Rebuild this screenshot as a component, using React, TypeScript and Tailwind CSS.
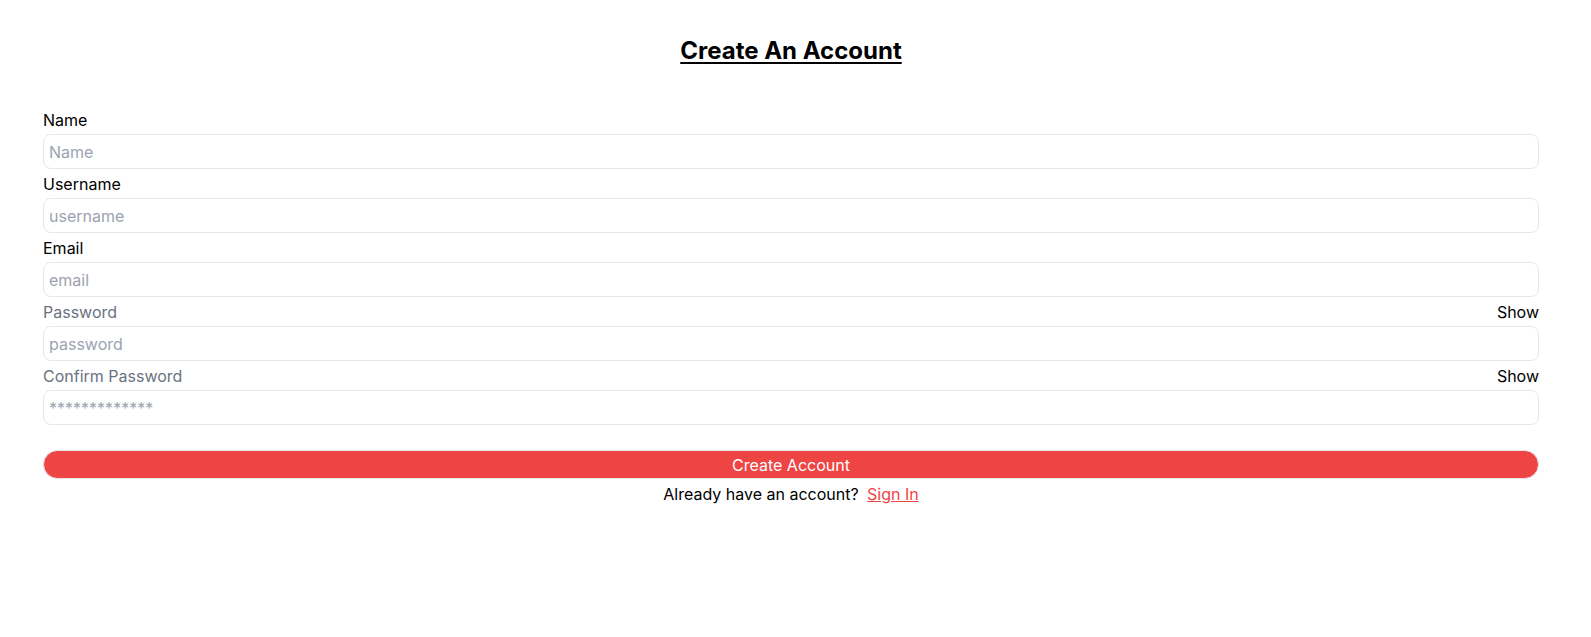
export default function App() {
  const fields = [
    { label: "Name", placeholder: "Name", muted: false, show: false },
    { label: "Username", placeholder: "username", muted: false, show: false },
    { label: "Email", placeholder: "email", muted: false, show: false, focus: true },
    { label: "Password", placeholder: "password", muted: true, show: true },
    { label: "Confirm Password", placeholder: "*************", muted: true, show: true },
  ];

  return (
    <div className="min-h-screen bg-white font-['Inter',sans-serif] text-black">
      <div className="pl-[43px] pr-[52px] pt-[35px]">
        <h1 className="text-center text-2xl leading-8 font-bold underline underline-offset-[3px] decoration-2">
          Create An Account
        </h1>

        <form className="mt-[41px] flex flex-col gap-[3px]">
          {fields.map((f) => (
            <div key={f.label} className="flex flex-col gap-0.5">
              <div className="flex h-6 items-center justify-between text-base leading-6">
                <label className={f.muted ? "text-[#6b7280]" : "text-black"}>{f.label}</label>
                {f.show && <span className="text-black">Show</span>}
              </div>
              <input
                type="text"
                autoFocus={f.focus}
                placeholder={f.placeholder}
                className="h-[35px] w-full rounded-lg border border-[#e5e7eb] px-[5px] text-base placeholder:text-[#9ca3af] caret-black focus:outline-none"
              />
            </div>
          ))}

          <button
            type="button"
            className="mt-[22px] h-[29px] w-full rounded-full border border-[#e5e7eb] bg-[#ef4444] text-base text-white"
          >
            Create Account
          </button>
        </form>

        <p className="mt-[3px] text-center text-base leading-6">
          Already have an account?{" "}
          <a href="#" className="ml-1 text-[#ef4444] underline">
            Sign In
          </a>
        </p>
      </div>
    </div>
  );
}
